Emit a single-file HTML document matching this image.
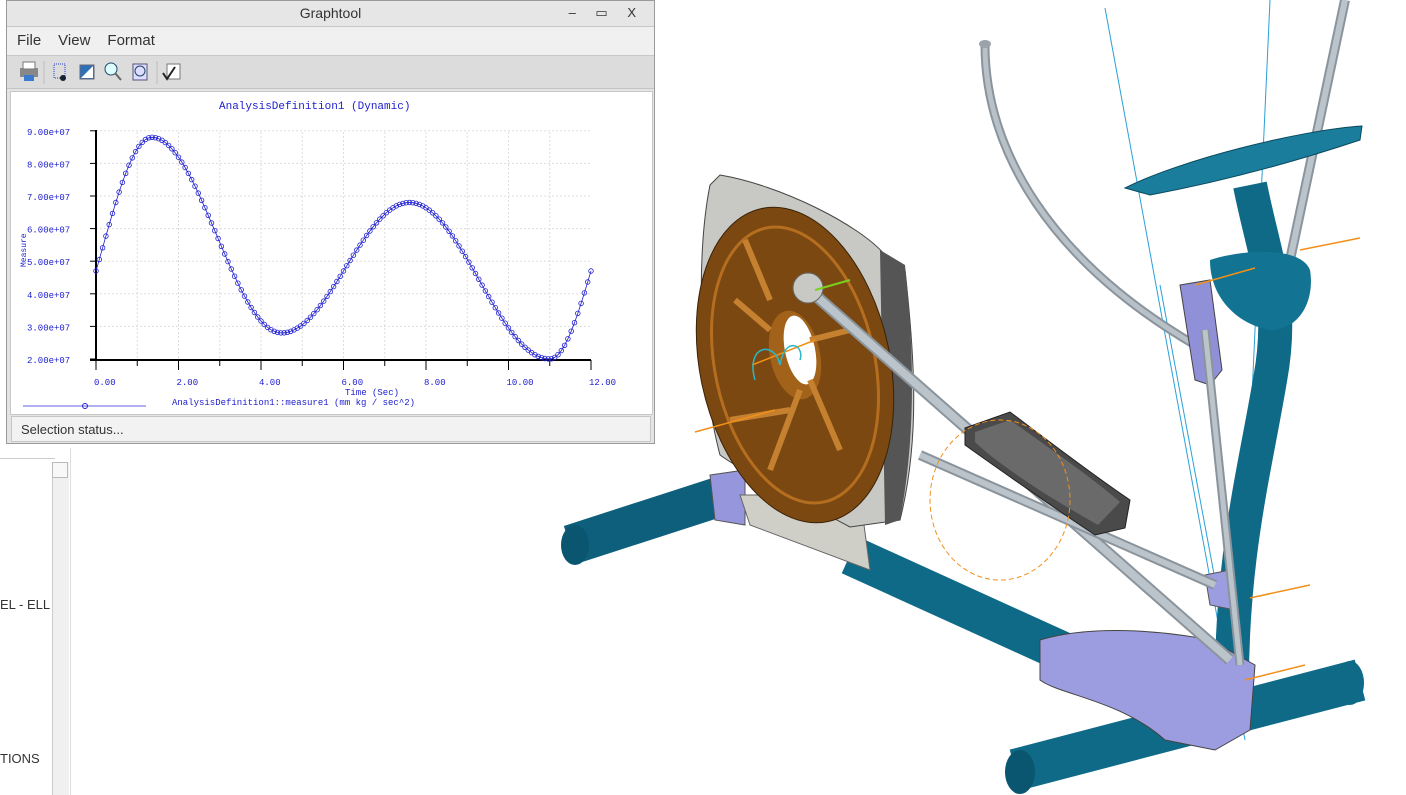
<!DOCTYPE html>
<html><head><meta charset="utf-8"><style>
body{margin:0;width:1406px;height:795px;overflow:hidden;background:#fff;font-family:"Liberation Sans",sans-serif;position:relative}
.win{position:absolute;left:6px;top:0;width:649px;height:444px;background:#e4e4e4;border:1px solid #9a9a9a;box-sizing:border-box}
.title{height:25px;background:#e6e6e6;text-align:center;font-size:14px;line-height:24px;color:#333;border-bottom:1px solid #c8c8c8}
.menu{height:28px;background:#f0f0f0;font-size:15px;line-height:28px;color:#333;padding-left:10px;border-bottom:1px solid #c8c8c8}
.menu span{margin-right:17px}
.tb{height:32px;background:#dcdcdc;border-bottom:1px solid #c4c4c4}
.plot{position:absolute;left:3px;top:90px;width:641px;height:322px;background:#fff;border:1px solid #c8c8c8}
.status{position:absolute;left:4px;top:415px;width:640px;height:26px;background:#f2f2f2;border:1px solid #c6c6c6;font-size:13px;line-height:26px;padding-left:9px;box-sizing:border-box;color:#333}
</style></head><body>
<div style="position:absolute;left:0;top:448px;width:70px;height:347px;border-right:1px solid #ddd;background:#fff"></div>
<div style="position:absolute;left:52px;top:462px;width:16px;height:333px;background:#f0f0f0;border-left:1px solid #ccc"></div>
<div style="position:absolute;left:52px;top:462px;width:16px;height:16px;border:1px solid #bbb;box-sizing:border-box;background:#f8f8f8"></div>
<div style="position:absolute;left:0;top:458px;width:55px;border-top:1px solid #ccc"></div>
<div style="position:absolute;left:0;top:597px;font-size:13px;color:#333">EL - ELL</div>
<div style="position:absolute;left:0;top:751px;font-size:13px;color:#333">TIONS</div>

<svg style="position:absolute;left:0;top:0" width="1406" height="795">
<line x1="1105" y1="8" x2="1225" y2="660" stroke="#2aa0d8" stroke-width="1"/>
<line x1="1270" y1="0" x2="1240" y2="660" stroke="#2aa0d8" stroke-width="1"/>
<line x1="1160" y1="285" x2="1245" y2="740" stroke="#2aa0d8" stroke-width="1"/>
<path d="M985 45 C985 150 1050 260 1195 345" stroke="#8a949c" stroke-width="9" fill="none"/>
<path d="M985 45 C985 150 1050 260 1195 345" stroke="#b9c1c8" stroke-width="5" fill="none"/>
<ellipse cx="985" cy="44" rx="6" ry="4" fill="#9aa2aa"/>
<path d="M1345 0 L1290 260" stroke="#8a949c" stroke-width="10"/>
<path d="M1345 0 L1290 260" stroke="#bcc4cb" stroke-width="6"/>
<path d="M570 545 L740 490" stroke="#0e5f7c" stroke-width="40" stroke-linecap="butt"/>
<ellipse cx="575" cy="545" rx="14" ry="20" fill="#0a5570"/>
<path d="M850 555 L1070 655" stroke="#0f6a88" stroke-width="40"/>
<path d="M1015 770 L1360 680" stroke="#0f6a88" stroke-width="42"/>
<ellipse cx="1020" cy="772" rx="15" ry="22" fill="#0a5570"/>
<ellipse cx="1350" cy="683" rx="14" ry="22" fill="#0f6a88"/>
<path d="M1250 185 C1265 260 1285 300 1270 380 C1255 470 1230 560 1232 700" stroke="#0f6a88" stroke-width="34" fill="none"/>
<path d="M1125 188 C1180 160 1300 130 1362 126 L1360 140 C1300 160 1230 180 1150 195 Z" fill="#1a7d9c" stroke="#0a4a60"/>
<path d="M1210 260 C1240 250 1300 245 1310 270 C1315 300 1300 330 1270 330 C1240 325 1210 300 1210 260Z" fill="#137393"/>
<path d="M1180 285 L1210 280 L1222 370 L1210 385 L1195 380Z" fill="#8f90d8" stroke="#444"/>
<path d="M710 475 L745 470 L745 525 L715 520Z" fill="#9596dc" stroke="#555"/>
<path d="M1040 640 C1090 625 1160 630 1210 640 L1255 665 L1250 730 L1215 750 L1165 740 C1120 700 1060 695 1040 680Z" fill="#9c9de0" stroke="#444"/>
<path d="M1205 575 L1230 570 L1235 610 L1210 605Z" fill="#9c9de0" stroke="#555"/>
<path d="M740 495 L860 495 L870 570 L750 525Z" fill="#cfcfc8" stroke="#666"/>
<path d="M720 175 C780 185 860 225 885 255 L905 270 C915 360 920 440 900 520 L850 527 C800 500 740 470 720 455 C700 380 695 260 710 185Z" fill="#c8c8c4" stroke="#444"/>
<path d="M880 250 L905 265 C915 360 915 440 900 520 L885 525 Z" fill="#555"/>
<ellipse cx="795" cy="365" rx="95" ry="160" transform="rotate(-12 795 365)" fill="#7a4810" stroke="#3a2208"/>
<ellipse cx="795" cy="365" rx="80" ry="140" transform="rotate(-12 795 365)" fill="none" stroke="#b56e20" stroke-width="3"/>
<ellipse cx="795" cy="355" rx="25" ry="45" transform="rotate(-12 795 355)" fill="#a2621a"/>
<ellipse cx="800" cy="350" rx="15" ry="35" transform="rotate(-12 800 350)" fill="#fff"/>
<path d="M745 240 L770 300 M735 300 L770 330 M730 420 L790 410 M770 470 L800 390 M840 450 L810 380 M850 330 L810 340" stroke="#c58030" stroke-width="6"/>
<path d="M815 295 L1230 660" stroke="#8a949c" stroke-width="12"/>
<path d="M815 295 L1230 660" stroke="#bcc4cb" stroke-width="8"/>
<path d="M920 455 L1215 585" stroke="#8a949c" stroke-width="10"/>
<path d="M920 455 L1215 585" stroke="#bcc4cb" stroke-width="6"/>
<path d="M1205 330 L1240 665" stroke="#8a949c" stroke-width="9"/>
<path d="M1205 330 L1240 665" stroke="#bcc4cb" stroke-width="5"/>
<circle cx="808" cy="288" r="15" fill="#c8c8c4" stroke="#666"/>
<path d="M965 428 L1010 412 C1060 450 1100 480 1130 500 L1125 528 L1095 535 C1050 505 1000 470 965 445Z" fill="#4a4a4a" stroke="#222"/>
<path d="M975 432 L1010 420 C1055 452 1095 480 1120 502 L1098 525 C1050 498 1000 466 975 442Z" fill="#6a6a6a"/>
<ellipse cx="1000" cy="500" rx="70" ry="80" fill="none" stroke="#f0901a" stroke-dasharray="5 3"/>
<path d="M695 432 L775 410 M1195 285 L1255 268 M1300 250 L1360 238 M1250 598 L1310 585 M1245 680 L1305 665" stroke="#f0901a" stroke-width="1.5"/>
<path d="M752 365 L815 340" stroke="#f0901a" stroke-width="1.5"/>
<path d="M755 380 C745 345 775 340 780 365 C785 335 805 345 800 360" stroke="#2ab8c8" fill="none" stroke-width="1.5"/>
<path d="M815 290 L850 280" stroke="#7ad020" stroke-width="2"/>
</svg>

<div class="win">
<div class="title">Graphtool<span style="position:absolute;right:10px;top:0;font-size:13px;letter-spacing:8px">– ▭ X</span></div>
<div class="menu"><span>File</span><span>View</span><span>Format</span></div>
<div class="tb"><svg width="200" height="32">
<rect x="13" y="12" width="18" height="9" fill="#888"/><rect x="16" y="6" width="12" height="7" fill="#fff" stroke="#777"/><rect x="17" y="19" width="10" height="6" fill="#3a7ad0"/>
<line x1="37" y1="5" x2="37" y2="28" stroke="#bbb"/>
<rect x="47" y="8" width="11" height="14" fill="none" stroke="#2040c0" stroke-dasharray="1 1"/><circle cx="56" cy="22" r="3" fill="#123"/>
<rect x="73" y="9" width="14" height="14" fill="#2d6fb8" stroke="#667"/><path d="M74 22 L86 10 L86 22Z" fill="#fff"/>
<circle cx="104" cy="13" r="6" fill="#dff" stroke="#246"/><path d="M108 17 L114 24" stroke="#666" stroke-width="2"/>
<rect x="126" y="8" width="14" height="16" fill="#ddf" stroke="#557"/><circle cx="133" cy="15" r="5" fill="none" stroke="#246"/>
<line x1="150" y1="5" x2="150" y2="28" stroke="#bbb"/>
<rect x="160" y="8" width="13" height="15" fill="#fff" stroke="#777"/><path d="M156 17 L160 23 L168 11" stroke="#222" stroke-width="2" fill="none"/>
</svg></div>
<div class="plot"><svg id="g" width="641" height="322" style="font-family:'Liberation Mono',monospace" fill="#2020d0"></svg></div>
<div class="status">Selection status...</div>
</div>
<script>
var g=document.getElementById('g'),s='';
function X(t){return 85+t*41.25}function Y(v){return 267-(v-2)*32.6}
for(var i=1;i<12;i++){s+='<line x1="'+X(i)+'" y1="40" x2="'+X(i)+'" y2="267" stroke="#ddd" stroke-dasharray="2 2"/>';}
for(var v=3;v<=9;v++){s+='<line x1="'+X(0)+'" y1="'+Y(v)+'" x2="'+X(12)+'" y2="'+Y(v)+'" stroke="#ddd" stroke-dasharray="2 2"/>';}
s+='<line x1="'+X(0)+'" y1="38" x2="'+X(0)+'" y2="268" stroke="#000" stroke-width="2"/>';
s+='<line x1="'+(X(0)-6)+'" y1="268" x2="'+X(12)+'" y2="268" stroke="#000" stroke-width="2"/>';
for(var v=2;v<=9;v++){s+='<line x1="'+(X(0)-6)+'" y1="'+Y(v)+'" x2="'+X(0)+'" y2="'+Y(v)+'" stroke="#000"/><text x="16" y="'+(Y(v)+4)+'" font-size="9">'+v+'.00e+07</text>';}
for(var t=0;t<=12;t++){s+='<line x1="'+X(t)+'" y1="268" x2="'+X(t)+'" y2="'+(t%2?274:278)+'" stroke="#000"/>';if(t%2==0)s+='<text x="'+(X(t)-2)+'" y="293" font-size="9">'+t.toFixed(2)+'</text>';}
s+='<text x="208" y="17" font-size="11">AnalysisDefinition1 (Dynamic)</text>';
s+='<text x="334" y="303" font-size="9">Time (Sec)</text>';
s+='<text x="161" y="313" font-size="9">AnalysisDefinition1::measure1 (mm kg / sec^2)</text>';
s+='<text x="15" y="175" font-size="8" transform="rotate(-90 15 175)">Measure</text>';
s+='<line x1="12" y1="314" x2="135" y2="314" stroke="#6060e0"/><circle cx="74" cy="314" r="2.5" fill="none" stroke="#2020d0"/>';
var k=[[-1.035,2.0],[1.35,8.8],[4.5,2.8],[7.6,6.8],[11,2.0],[13,7.4]];
function f(t){for(var j=0;j<k.length-1;j++){if(t<=k[j+1][0]){var a=k[j],b=k[j+1],u=(t-a[0])/(b[0]-a[0]);return a[1]+(b[1]-a[1])*(1-Math.cos(Math.PI*u))/2;}}return 4.7;}
var d='';for(var t=0;t<=12.001;t+=0.08){d+=(d?'L':'M')+X(t).toFixed(1)+' '+Y(f(t)).toFixed(1);s+='<circle cx="'+X(t).toFixed(1)+'" cy="'+Y(f(t)).toFixed(1)+'" r="2.3" fill="none" stroke="#2020d0" stroke-width="0.8"/>';}
s+='<path d="'+d+'" fill="none" stroke="#2020d0" stroke-width="0.8"/>';
g.innerHTML=s;
</script>
</body></html>
